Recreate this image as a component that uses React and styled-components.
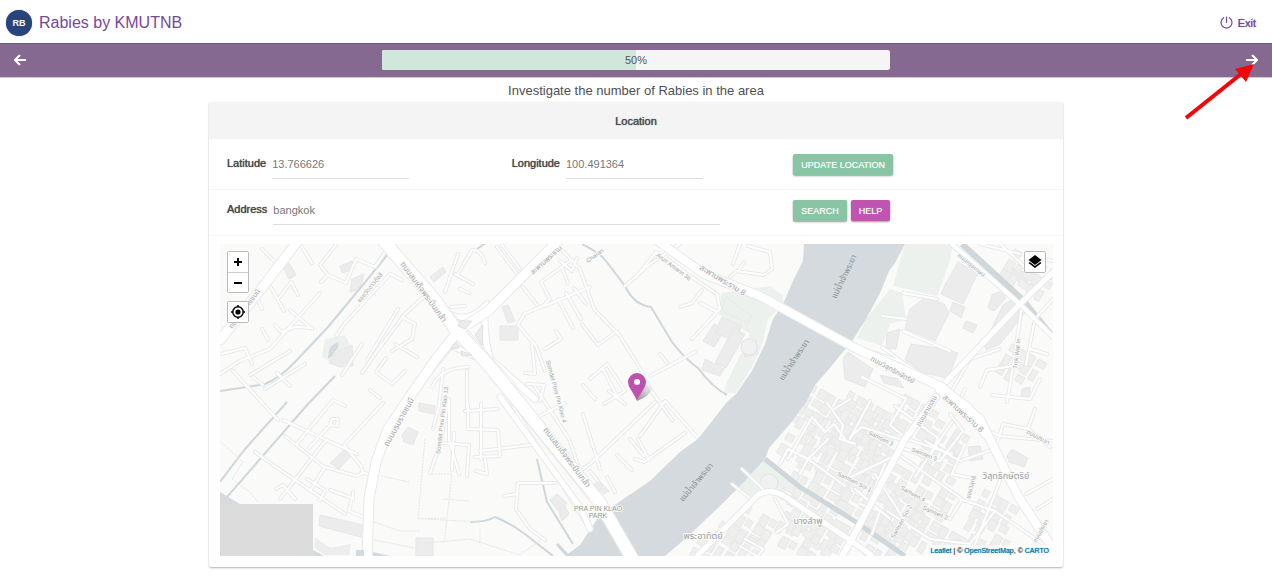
import React from 'react';
import styled, { createGlobalStyle, css } from 'styled-components';

const GlobalStyle = createGlobalStyle`
  *, *::before, *::after { box-sizing: border-box; }
  body {
    margin: 0;
    background: #fff;
    color: #444;
    font-family: 'Liberation Sans', 'Noto Sans', sans-serif;
    font-size: 11px;
  }
`;

const strong = css`
  text-shadow: 0 0 1px currentColor;
`;

const Header = styled.header`
  display: flex;
  align-items: center;
  justify-content: space-between;
  height: 43px;
  padding: 2px 16px 0 6px;
`;

const Brand = styled.a`
  display: flex;
  align-items: center;
  gap: 7px;
  color: #76489c;
  font-size: 16px;
  text-decoration: none;
`;

const Logo = styled.span`
  display: grid;
  place-items: center;
  width: 26px;
  height: 26px;
  border-radius: 50%;
  background: #27457c;
  box-shadow: 0 0 1px #76489c;
  color: #fff;
  font-size: 9px;
  font-weight: bold;
`;

const ExitLink = styled.a`
  display: flex;
  align-items: center;
  gap: 5px;
  color: #6f459b;
  text-decoration: none;
  ${strong}
`;

const StepBar = styled.nav`
  position: relative;
  display: flex;
  align-items: center;
  justify-content: space-between;
  height: 34px;
  padding: 0 14px;
  background: #856990;
  box-shadow: inset 0 1px 0 #6c5876, 0 1px 0 #d5c6dc;
`;

const StepButton = styled.button`
  display: grid;
  place-items: center;
  padding: 0;
  border: 0;
  background: none;
  color: #fff;
  cursor: pointer;
`;

const Progress = styled.div`
  display: grid;
  align-items: center;
  width: 40vw;
  height: 20px;
  border-radius: 2px;
  background: #f5f5f5;
  overflow: hidden;
  > * { grid-area: 1 / 1; }
`;

const ProgressFill = styled.div`
  height: 100%;
  background: #d0e8dc;
`;

const ProgressText = styled.span`
  text-align: center;
  color: #555;
`;

const Pointer = styled.svg`
  position: absolute;
  top: 20px;
  right: 16px;
  pointer-events: none;
  z-index: 1;
`;

const Title = styled.h1`
  margin: 0;
  padding: 5px 0 2px;
  font-size: 13px;
  font-weight: normal;
  line-height: 18px;
  text-align: center;
  color: #505050;
`;

const Card = styled.section`
  width: 100%;
  max-width: 854px;
  margin: 0 auto 14px;
  border-radius: 2px;
  background: #fff;
  box-shadow: 0 1px 2px rgba(0, 0, 0, 0.3);
  overflow: hidden;
`;

const CardTitle = styled.h2`
  margin: 0;
  padding: 11px 10px 9px;
  background: #f4f4f4;
  color: #444;
  font-size: 11px;
  font-weight: normal;
  line-height: 17px;
  text-align: center;
  ${strong}
`;

const Row = styled.div`
  display: grid;
  grid-template-columns: repeat(3, 1fr);
  align-items: center;
  padding: ${(p) => (p.$tight ? '5px' : '10px')} 0 10px;
  border-bottom: 1px solid #f5f5f5;
`;

const Field = styled.div`
  grid-column: span ${(p) => p.$span || 1};
  display: flex;
  align-items: center;
  gap: 6px;
  padding-left: 18px;
`;

const Label = styled.label`
  padding-bottom: 3px;
  color: #444;
  ${strong}
`;

const Input = styled.input`
  width: ${(p) => (p.$wide ? '447px' : '137px')};
  height: 30px;
  padding: 0;
  border: 0;
  border-bottom: 1px solid #ddd;
  outline: 0;
  background: none;
  color: #777;
  font: inherit;
`;

const Actions = styled.div`
  display: flex;
  gap: 4px;
  padding: 1px 0 0 15px;
`;

const Button = styled.button`
  height: 21px;
  padding: 0 8px;
  border: 0;
  border-radius: 2px;
  background: ${(p) => (p.$pink ? '#bf55b0' : '#87c5a4')};
  box-shadow: 0 1px 2px rgba(0, 0, 0, 0.4);
  color: #fff;
  font-family: inherit;
  font-size: 9px;
  text-transform: uppercase;
  text-shadow: 0 0 1px rgba(255, 255, 255, 0.6);
  cursor: pointer;
`;

const MapFrame = styled.div`
  position: relative;
  margin: 8px 10px 11px 11px;
`;

const MapDrawing = styled.svg`
  display: block;
  width: 100%;
  height: 312px;
  background: #fafaf8;
  font-family: 'Liberation Sans', 'Noto Sans Thai', 'Noto Sans', sans-serif;
`;

const Controls = styled.div`
  position: absolute;
  top: 7px;
  ${(p) => (p.$right ? 'right: 7px;' : 'left: 7px;')}
  display: flex;
  flex-direction: column;
  gap: 8px;
`;

const ControlGroup = styled.div`
  width: 22px;
  border: 1px solid #bbb;
  border-radius: 2px;
  background: #fff;
  overflow: hidden;
`;

const ControlButton = styled.button`
  display: grid;
  place-items: center;
  width: 20px;
  height: 20px;
  padding: 0;
  border: 0;
  background: #fff;
  color: #000;
  cursor: pointer;
  & + & { border-top: 1px solid #ccc; }
`;

const Attribution = styled.footer`
  position: absolute;
  right: 0;
  bottom: 0;
  padding: 1px 4px;
  background: rgba(255, 255, 255, 0.7);
  color: #444;
  font-size: 7px;
  line-height: 9px;
  ${strong}
  a { color: #0078a8; text-decoration: none; }
`;

/* ---- Map data ---- */

const RIVER =
  'M804 245L803 262L793 282L783 305L773 320L765 345L752 372L736 395L727 403L698 440L680 453L650 482L600 516L590 531L580 546L565 557H665L685 540L720 507L745 482L765 460L769 449L790 425L806 403L815 386L829 370L852 342L866 320L880 294L889 272L895 264L905 245Z';

const PARKS = [
  'M721 294L770 287L783 296L783 305L768 320L763 343L752 368L735 395L724 393L727 383L742 352L750 335L719 315Z',
  'M905 245L953 245L950 262L937 297L893 287Z',
  'M890 290L902 294L906 320L890 325L882 347L857 339L866 320Z',
  'M765 461L791 484L784 495L765 492L752 501L739 488Z',
  'M325 340L345 336L352 350L333 365L322 358Z',
];

const BUILDINGS = [
  'M338 352L352 346L353 367L340 368L329 364Z',
  'M500 327H518V341H500Z', 'M502 308L508 306L515 322L508 324Z',
  'M340 267L352 262L354 270L342 274Z', 'M352 280L364 275L360 290L350 293Z',
  'M430 278L443 268L446 273L434 283Z', 'M283 268L289 264L296 276L289 280Z',
  'M330 464L344 451L351 457L339 470Z', 'M402 436L408 428L418 433L413 446L404 443Z',
  'M320 516L363 526L361 538L319 527Z', 'M416 539H433V557H416Z', 'M419 404L435 407L434 415L419 412Z',
  'M714 325L725 330L714 348L703 342Z', 'M722 318L742 327L735 342L715 334Z',
  'M733 330L745 335L726 369L715 364Z', 'M705 360L724 370L720 377L702 371Z',
  'M742 343L756 341L758 355L745 358Z', 'M550 501L557 495L567 504L558 512Z', 'M559 512L565 507L569 515L562 522Z',
  'M593 486L599 481L609 492L604 495Z', 'M945 286L958 263L978 274L963 305L941 295Z',
  'M910 310L926 298L944 305L949 314L935 342L905 330Z', 'M911 345L937 349L958 354L948 379L924 374L905 361Z',
  'M953 303L965 308L961 319L950 312Z', 'M966 322L977 326L973 334L963 329Z', 'M992 296L1001 292L1006 299L994 312L988 309Z',
  'M1010 268L1030 275L1026 286L1006 276Z', 'M887 334L900 330L896 350L886 350Z',
  'M843 360L848 353L873 370L865 388L845 380Z', 'M880 376L898 380L904 389L884 384Z',
  'M968 448L980 447L983 460L970 462Z', 'M1007 457L1012 450L1028 459L1024 468L1009 463Z',
  'M1022 390L1030 388L1030 398L1021 400Z', 'M1003 306L1013 300L1025 314L1000 345L986 351L984 345Z',
];

/* City blocks: x, y, columns, rows of houses, each turned by 30 degrees */
const BLOCKS = [];
[
  [812, 385, 7, 4], [806, 408, 6, 3], [788, 434, 5, 2], [850, 392, 6, 5], [845, 425, 6, 5],
  [800, 462, 6, 4], [870, 450, 5, 6], [890, 482, 5, 5], [745, 505, 4, 4], [722, 522, 4, 3],
  [786, 512, 6, 3], [800, 500, 6, 3], [868, 505, 5, 4], [922, 462, 5, 5], [938, 420, 4, 4],
  [925, 517, 7, 3], [975, 510, 5, 4], [850, 400, 6, 3], [1012, 345, 4, 3], [700, 538, 5, 2],
  [1015, 250, 5, 3], [985, 490, 4, 3], [905, 395, 4, 3],
].forEach(([x, y, cols, rows], n) => {
  for (let r = 0; r < rows; r += 1) {
    for (let c = 0; c < cols; c += 1) {
      const k = (c * 7 + r * 5 + n * 3) % 9;
      if (k !== 4) {
        BLOCKS.push([x + c * 9 - r * 6, y + c * 5 + r * 10, 6 + (k % 4), 7 + (k % 3) * 2]);
      }
    }
  }
});

const CANALS = [
  ['M388 255L362 287L328 328L295 363Q280 379 265 385Q243 389 220 392', 2],
  ['M335 377L308 405L227 498', 2], ['M287 403L245 450L220 483', 2],
  ['M582 245Q600 254 606 262L625 287Q634 306 651 308L672 343Q685 360 698 369Q712 388 727 396', 2],
  ['M537 460L547 503L573 545', 2], ['M470 523Q487 523 495 518Q510 524 525 535L553 557', 2],
  ['M962 245L1022 300L1053 338', 6], ['M765 460L800 488L853 521L905 557', 5], ['M557 545L568 557', 3],
  ['M477 250L487 243', 2],
];

const LANES = [
  'M221 355L245 349L252 365', 'M220 375L240 362L270 350L320 294', 'M233 372L278 421', 'M250 376L290 352',
  'M262 330L268 341M275 326L281 333L295 328L312 329', 'M253 378L263 386M277 374L290 387M265 390L305 365',
  'M300 245L312 264M262 250L280 268M278 300L291 283L298 296', 'M254 292L262 310M268 283L284 312M290 311L312 330',
  'M321 283L328 276L320 266L336 246M328 276L346 284L356 260L375 268L388 249', 'M336 337L345 324L390 275L402 281',
  'M362 374L377 352L405 315L430 292M342 376L362 345', 'M367 361L398 310M402 318L415 325L412 340L392 352M395 345L417 358',
  'M386 359L376 373L392 385L405 372M370 391L380 399', 'M283 421L357 455M255 453L276 468L345 515',
  'M285 437L324 468L357 477L363 474L361 467L344 446L383 404', 'M296 446L333 401L345 407M309 449L330 426L337 427L338 420L332 420L330 426',
  'M280 500L326 441M310 492L325 468M276 490L283 486L295 500M307 480L325 491L320 501', 'M330 491L352 499L349 512L363 518M353 493V500M361 474L371 475',
  'M445 293L458 255M458 275L472 251Q481 250 485 264M455 275L473 285M460 290L469 294M451 308L465 307',
  'M497 248L517 275M502 246L520 270M523 288L537 306M570 262L541 283L550 300L543 307L524 315L518 326L536 347L545 372',
  'M545 307L590 288M558 300L573 329M566 294L581 320M574 289L586 305', 'M545 350L561 340L556 332M532 345L535 375L525 374M527 385L544 386L540 402',
  'M582 325L598 346L617 332M556 245L580 270L594 310L620 337L641 371L650 390L673 422', 'M560 262L572 272L577 259M568 284L562 269',
  'M590 380L607 365L625 392L604 405M583 386L595 400M603 370L618 399M609 392L625 405', 'M625 287L650 265L680 245M635 279L656 253L667 263',
  'M650 377L695 353M660 355L667 364', 'M665 258L690 277L717 295L720 310L692 340M680 308L692 304L702 291M700 304L716 312',
  'M733 265L740 245M748 247L770 253L772 270L764 276L737 272L730 278M738 272L744 263',
  'M449 400V440L459 475M468 405V430M465 412L498 410M469 430L498 431L500 457L475 458',
  'M442 444L469 446L467 477M454 434L452 471M481 405V460M476 472L487 475L485 460', 'M480 452L530 446M510 402L588 528',
  'M448 405L440 445L430 474M555 484L518 484L516 510L530 530L545 541M504 497L517 495',
  'M443 370L439 407L433 430M467 372V408M468 368Q440 369 432 388', 'M535 388L569 440L580 472L590 465L655 403',
  'M583 415L600 470M540 417L565 404M607 478L615 493M617 456L632 471M630 440L644 457M590 472L598 482',
  'M635 460L644 463L685 434M640 437L665 402L697 438M638 440L649 461',
  'M788 460L812 418L825 433L834 425L845 440M780 465L788 450L808 460L828 440', 'M800 475L808 460L845 487M765 492L742 470M752 501L732 485',
  'M827 404L843 426L840 440L855 445M834 410L850 400', 'M850 438L862 428L902 441M862 378L906 400L890 426L907 440L952 455',
  'M850 440L870 402M845 481L898 455L962 500L950 520M855 490L890 520M875 475L910 530', 'M905 450L940 462L963 432L950 415M925 442L960 462L995 450L1003 425L1028 430',
  'M915 478L952 423M887 512L930 540L970 545L995 512L960 500', 'M1022 307L1013 367L987 371L980 388M1013 367L1007 403M1053 300L1035 320L1026 366M1030 350L1047 355',
  'M895 407L938 439L931 455M985 430L1000 437L1053 442M1035 410L1028 430L1050 448', 'M1000 482L975 545M995 512L1043 545M1026 495L1053 480M1037 510L1053 500',
  'M992 396L1030 400L1040 380M965 390L958 405M950 395L970 360L1000 350', 'M903 294L937 300M882 317L906 320M903 332L950 352M882 348L905 365',
  'M745 540L763 550L758 557M740 547L762 560M775 500L788 525L777 533', 'M860 505L880 512L872 535M885 465L870 500',
  'M1023 268L1035 258L1053 262M980 245L1020 255M1000 245L1025 268', 'M965 445L952 475L975 480M930 380L900 362L862 350',
];

const STREETS = [
  ['M952 245L1022 307L1053 338', 4], ['M698 556L757 497Q768 488 784 497L853 543L872 557', 5],
  ['M1053 273L1018 307L942 387', 5], ['M936 398L905 440L852 540L842 557', 6], ['M485 310Q483 335 490 360L535 400', 6],
  ['M455 325L452 345L425 378L400 410', 5], ['M425 290L450 315Q468 325 487 305', 5], ['M500 398L580 508L590 530', 5],
  ['M454 348L480 360L510 398', 5],
];

const HIGHWAYS = [
  ['M220 341L265 285L297 243', 9], ['M382 240L434 300L456 331L485 362L518 402L600 504L632 559', 12],
  ['M560 240L488 312L458 332L436 360L411 396L388 430L376 463L369 500L367 559', 9],
  ['M658 242L704 275L760 297L855 349L942 388L980 420L1018 497L1053 550', 8],
  ['M940 390L968 409L986 435', 9],
];

/* Labels: x, y, turn, size, text */
const STREET_NAMES = [
  [232, 330, -53, 7, 'ถนนบรมราชชนนี'],
  [400, 265, 54, 8, 'ถนนสมเด็จพระปิ่นเกล้า'],
  [543, 431, 53, 8, 'ถนนสมเด็จพระปิ่นเกล้า'],
  [388, 448, -61, 8, 'ถนนบรมราชชนนี'],
  [533, 276, -42, 7, 'สะพานพระราม'],
  [699, 270, 31, 8, 'สะพานพระราม 8'],
  [870, 361, 29, 7, 'ถนนวิสุทธิกษัตริย์'],
  [942, 399, 42, 8, 'สะพานพระราม 8'],
  [360, 304, -51, 6, 'ซอยวัดดาวดึงส์'],
  [656, 257, 37, 6, 'Arun Amarin 36'],
  [588, 264, -36, 6, 'Charan'],
  [546, 362, 75, 6, 'Somdet Phra Pin Klao 4'],
  [440, 455, -83, 6, 'Somdet Phra Pin Klao 13'],
  [1017, 370, -83, 6, 'Trok Wat In'],
  [837, 476, 27, 6, 'Samsen Soi 1'],
  [868, 435, 27, 6, 'Samsen 3'],
  [911, 452, 22, 6, 'Samsen 5'],
  [894, 540, -61, 6, 'Samsen Soi 2'],
  [900, 490, 29, 6, 'Samsen 4'],
  [922, 510, 24, 6, 'Samsen 2'],
  [920, 428, -60, 7, 'ถนนสามเสน'],
  [970, 500, -75, 6, 'ซอยวิสุทธิ'],
  [957, 257, 39, 6, 'ถนนกรุงเกษม'],
  [1026, 434, 28, 6, 'ถนนประชา'],
  [1036, 544, -60, 6, 'ถนนประชา'],
];

const WATER_NAMES = [
  [783, 382, -56, 'แม่น้ำเจ้าพระยา'], [836, 300, -64, 'แม่น้ำเจ้าพระยา'], [683, 503, -50, 'แม่น้ำเจ้าพระยา'],
];

const Roads = ({ items }) => (
  <g fill="none" strokeLinejoin="round" strokeLinecap="round">
    {items.map(([d, w]) => <path key={`c${d}`} d={d} stroke="#e8eaea" strokeWidth={w + 2} />)}
    {items.map(([d, w]) => <path key={d} d={d} stroke="#fff" strokeWidth={w} />)}
  </g>
);

const CityMap = () => (
  <MapDrawing viewBox="220 245 833 312" preserveAspectRatio="xMidYMid slice" role="img" aria-label="Map of Bangkok">
    <g fill="#edf1ed">{PARKS.map((d) => <path key={d} d={d} />)}</g>
    <g fill="#ececec" stroke="#e6e7e7">{BUILDINGS.map((d) => <path key={d} d={d} />)}</g>
    <g fill="#efefee" stroke="#e8e9e9">
      {BLOCKS.map(([x, y, w, h], i) => (
        <rect key={i} x={x} y={y} width={w} height={h} transform={`rotate(30 ${x} ${y})`} />
      ))}
    </g>
    <path d={RIVER} fill="#d4dadd" />
    <g fill="none" stroke="#cfd7da" strokeLinejoin="round">
      {CANALS.map(([d, w]) => <path key={d} d={d} strokeWidth={w} />)}
    </g>
    <g fill="none" stroke="#e4e6e6" strokeDasharray="2 1">
      <path d="M220 442L243 463L232 480L250 493L258 503M425 440L418 520L445 519M374 523L400 532L420 532M374 541L415 549" />
      <path d="M425 520L480 523M425 544L470 540L520 556L545 538M443 500L470 502M480 530V545M432 475L452 475L444 544M381 477L409 483" />
      <path d="M727 298Q740 310 752 317L748 324L728 315Q718 310 727 298" />
    </g>
    <circle cx="749" cy="348" r="8" fill="#f1f1f1" stroke="#e2e5e4" />
    <circle cx="769" cy="484" r="9" fill="#f1f2f0" stroke="#e2e5e4" />
    <path d="M328 359Q328 346 338 343Q340 349 334 353Q333 359 328 359Z" fill="#d4dadd" />
    <Roads items={LANES.map((d) => [d, 2])} />
    <Roads items={STREETS} />
    <Roads items={HIGHWAYS} />
    <path d="M460 322L472 322L465 330L458 327ZM475 336L483 326L482 346ZM450 350L456 343L459 349ZM461 352L472 356L462 357Z" fill="#ececec" stroke="#dfe1e1" />
    <path d="M511 404L590 500M451 312L516 386" stroke="#e6e8e8" fill="none" />
    <path d="M220 493L240 505H220ZM313 551L325 557H313ZM356 551H364V557H356ZM373 553L390 557H373Z" fill="#d4dadd" />
    <path d="M314 537L330 548L352 544L350 557H325L314 549Z" fill="#ededed" stroke="#fff" />
    <path d="M220 505H313V557H220Z" fill="#dcdcdc" />
    <g fill="#a3a9ad" stroke="#fafaf8" strokeWidth="2" paintOrder="stroke" strokeLinejoin="round">
      {STREET_NAMES.map(([x, y, a, size, text]) => (
        <text key={`${x} ${y}`} fontSize={size} transform={`translate(${x} ${y}) rotate(${a})`}>{text}</text>
      ))}
      <g fontSize="9" fill="#969fa4" textAnchor="middle">
        <text x="1006" y="480">วิสุทธิกษัตริย์</text>
        <text x="808" y="525">บางลำพู</text>
        <text x="703" y="540">พระอาทิตย์</text>
      </g>
      <g fontSize="7" fill="#8fa291" textAnchor="middle">
        <text x="598" y="512">PRA PIN KLAO</text>
        <text x="598" y="519">PARK</text>
      </g>
    </g>
    <g fontSize="8" fill="#858f94">
      {WATER_NAMES.map(([x, y, a, text]) => (
        <text key={x} transform={`translate(${x} ${y}) rotate(${a})`}>{text}</text>
      ))}
    </g>
    <defs>
      <linearGradient id="pinShade" x1="0" y1="1" x2="1" y2="0">
        <stop offset="0" stopColor="#777" stopOpacity="0.8" />
        <stop offset="1" stopColor="#777" stopOpacity="0" />
      </linearGradient>
    </defs>
    <path d="M637 402L644 387Q652 384 652 390Q650 397 637 402Z" fill="url(#pinShade)" />
    <path d="M637 402Q636 399 631 391Q628 387 628 383A9 9 0 0 1 646 383Q646 387 643 391Q638 399 637 402Z" fill="#bd52ae" />
    <circle cx="637" cy="383" r="3" fill="#fff" />
  </MapDrawing>
);

const Arrow = ({ left }) => (
  <svg width="12" height="12" viewBox="0 0 12 12" fill="none" stroke="currentColor" strokeWidth="2" aria-hidden="true">
    <path d={left ? 'M12 6H2M6 1L1 6L6 11' : 'M0 6H10M6 1L11 6L6 11'} />
  </svg>
);

export default function App() {
  return (
    <>
      <GlobalStyle />
      <Header>
        <Brand href="#home"><Logo>RB</Logo>Rabies by KMUTNB</Brand>
        <ExitLink href="#exit">
          <svg width="13" height="13" viewBox="0 0 13 13" fill="none" stroke="currentColor" strokeLinecap="round" aria-hidden="true">
            <path d="M6.500 1V6.500M3.700 1.800A5.500 5.500 0 1 0 9.300 1.800" strokeWidth="1.200" />
          </svg>
          Exit
        </ExitLink>
      </Header>
      <StepBar>
        <StepButton type="button" aria-label="Previous"><Arrow left /></StepButton>
        <Progress role="progressbar" aria-valuenow={50} aria-valuemin={0} aria-valuemax={100}>
          <ProgressFill style={{ width: '50%' }} />
          <ProgressText>50%</ProgressText>
        </Progress>
        <StepButton type="button" aria-label="Next"><Arrow /></StepButton>
        <Pointer width="71" height="57" viewBox="0 0 71 57" aria-hidden="true">
          <path d="M1 55L56 11" stroke="#f50505" strokeWidth="4" />
          <path d="M69 1L50 6L61 19Z" fill="#f50505" />
        </Pointer>
      </StepBar>
      <main>
        <Title>Investigate the number of Rabies in the area</Title>
        <Card>
          <CardTitle>Location</CardTitle>
          <Row>
            <Field>
              <Label htmlFor="lat">Latitude</Label>
              <Input id="lat" defaultValue="13.766626" />
            </Field>
            <Field>
              <Label htmlFor="lng">Longitude</Label>
              <Input id="lng" defaultValue="100.491364" />
            </Field>
            <Actions><Button type="button">Update location</Button></Actions>
          </Row>
          <Row $tight>
            <Field $span={2}>
              <Label htmlFor="address">Address</Label>
              <Input id="address" $wide defaultValue="bangkok" />
            </Field>
            <Actions>
              <Button type="button">Search</Button>
              <Button type="button" $pink>Help</Button>
            </Actions>
          </Row>
          <MapFrame>
            <CityMap />
            <Controls>
              <ControlGroup>
                <ControlButton type="button" aria-label="Zoom in">
                  <svg width="8" height="8" viewBox="0 0 8 8" stroke="currentColor" strokeWidth="2"><path d="M0 4H8M4 0V8" /></svg>
                </ControlButton>
                <ControlButton type="button" aria-label="Zoom out">
                  <svg width="8" height="8" viewBox="0 0 8 8" stroke="currentColor" strokeWidth="2"><path d="M0 4H8" /></svg>
                </ControlButton>
              </ControlGroup>
              <ControlGroup>
                <ControlButton type="button" aria-label="Show my position">
                  <svg width="16" height="16" viewBox="0 0 16 16" fill="none" stroke="currentColor" strokeWidth="1.500">
                    <circle cx="8" cy="8" r="5.200" />
                    <circle cx="8" cy="8" r="2.600" fill="currentColor" stroke="none" />
                    <path d="M8 1V3M8 13V15M1 8H3M13 8H15" />
                  </svg>
                </ControlButton>
              </ControlGroup>
            </Controls>
            <Controls $right>
              <ControlGroup>
                <ControlButton type="button" aria-label="Layers">
                  <svg width="14" height="14" viewBox="0 0 14 14" fill="currentColor">
                    <path d="M7 0L13.500 5L7 10L0.500 5Z" />
                    <path d="M0.500 8L1.800 7L7 11L12.200 7L13.500 8L7 13Z" />
                  </svg>
                </ControlButton>
              </ControlGroup>
            </Controls>
            <Attribution>
              <a href="#leaflet">Leaflet</a> | © <a href="#osm">OpenStreetMap</a>, © <a href="#carto">CARTO</a>
            </Attribution>
          </MapFrame>
        </Card>
      </main>
    </>
  );
}
